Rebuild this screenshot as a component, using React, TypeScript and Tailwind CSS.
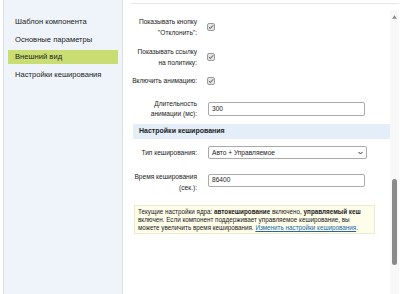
import React from "react";

const CheckBox = () => (
  <span className="flex h-[8px] w-[8px] items-center justify-center rounded-[2px] border border-[#9a9a9a] bg-[#e6e6e6]">
    <svg viewBox="0 0 8 8" className="h-[6px] w-[6px]">
      <path d="M1.2 4.2 L3.1 6 L6.8 1.8" fill="none" stroke="#333" strokeWidth="1.2" />
    </svg>
  </span>
);

const Label = ({ children, leading = "leading-[11px]" }: { children: React.ReactNode; leading?: string }) => (
  <div className={`w-[66px] shrink-0 whitespace-nowrap text-right ${leading}`}>{children}</div>
);

const menu = ["Шаблон компонента", "Основные параметры", "Внешний вид", "Настройки кеширования"];

export default function App() {
  return (
    <div className="flex h-[294px] w-[403px] overflow-hidden bg-white pl-[3px] font-['Liberation_Sans',Arial,sans-serif] text-[6.6px] text-[#222]">
      {/* sidebar */}
      <div className="flex w-[120px] shrink-0 flex-col border-x border-[#d6dee6] bg-[#eef4f9] px-[4px] pt-[15px] text-[7.6px]">
        {menu.map((item, i) => (
          <div
            key={item}
            className={`flex h-[14px] items-center pl-[7px] ${i > 0 ? "mt-[3.5px]" : ""} ${
              i === 2 ? "bg-[#c9dd73]" : ""
            }`}
          >
            {item}
          </div>
        ))}
      </div>

      {/* main */}
      <div className="flex flex-1 flex-col pl-[8px] pt-[3px]">
        <div className="mr-[4px] flex flex-1 border-t border-[#e3e8ec]">
          <div className="flex flex-1 flex-col">
            <div className="mt-[12px] flex items-center gap-[10px]">
              <Label>
                Показывать кнопку
                <br />
                "Отклонить":
              </Label>
              <CheckBox />
            </div>
            <div className="mt-[8px] flex items-center gap-[10px]">
              <Label>
                Показывать ссылку
                <br />
                на политику:
              </Label>
              <CheckBox />
            </div>
            <div className="mt-[7px] flex items-center gap-[10px]">
              <Label>Включить анимацию:</Label>
              <CheckBox />
            </div>
            <div className="mt-[13px] flex items-center gap-[11px]">
              <Label leading="leading-[10px]">
                Длительность
                <br />
                анимации (мс):
              </Label>
              <div className="flex h-[14px] w-[157px] items-center rounded-[2px] border border-[#a9a9a9] px-[3px]">300</div>
            </div>
            <div className="ml-[2px] mt-[5px] flex h-[15px] items-center bg-[#e3eef9] pl-[6px] text-[7px] font-bold">
              Настройки кеширования
            </div>
            <div className="mt-[7px] flex items-center gap-[11px]">
              <Label>Тип кеширования:</Label>
              <div className="flex h-[13px] w-[159px] items-center justify-between rounded-[2px] border border-[#a9a9a9] px-[3px]">
                <span>Авто + Управляемое</span>
                <svg viewBox="0 0 8 6" className="h-[4px] w-[5px]">
                  <path d="M1 1.5 L4 4.5 L7 1.5" fill="none" stroke="#222" strokeWidth="1.6" />
                </svg>
              </div>
            </div>
            <div className="mt-[12px] flex items-center gap-[11px]">
              <Label>
                Время кеширования
                <br />
                (сек.):
              </Label>
              <div className="-mt-[4px] flex h-[13px] w-[157px] items-center rounded-[2px] border border-[#a9a9a9] px-[3px]">86400</div>
            </div>
            <div className="ml-[3px] mt-[12px] w-[241px] border border-[#ecebd0] bg-[#fdfde9] pb-[1px] pl-[3px] pr-[2px] pt-[2px] text-[6.3px] leading-[8px] text-[#222]">
              Текущие настройки ядра: <b>автокеширование</b> включено, <b>управляемый кеш</b> включен. Если компонент
              поддерживает управляемое кеширование, вы можете увеличить время кеширования.{" "}
              <a className="text-[#2067b0] underline">Изменить настройки кеширования</a>.
            </div>
          </div>
          {/* scrollbar */}
          <div className="relative mt-[6px] w-[9px] bg-[#f8f8f8]">
            <svg viewBox="0 0 6 4" className="absolute left-[2px] top-[5px] h-[4px] w-[5px]">
              <path d="M0 4 L3 0 L6 4 Z" fill="#8a8a8a" />
            </svg>
            <div className="absolute left-[2px] top-[169px] h-[86px] w-[5px] rounded-[3px] bg-[#8a8a8a]" />
          </div>
        </div>
      </div>
    </div>
  );
}
